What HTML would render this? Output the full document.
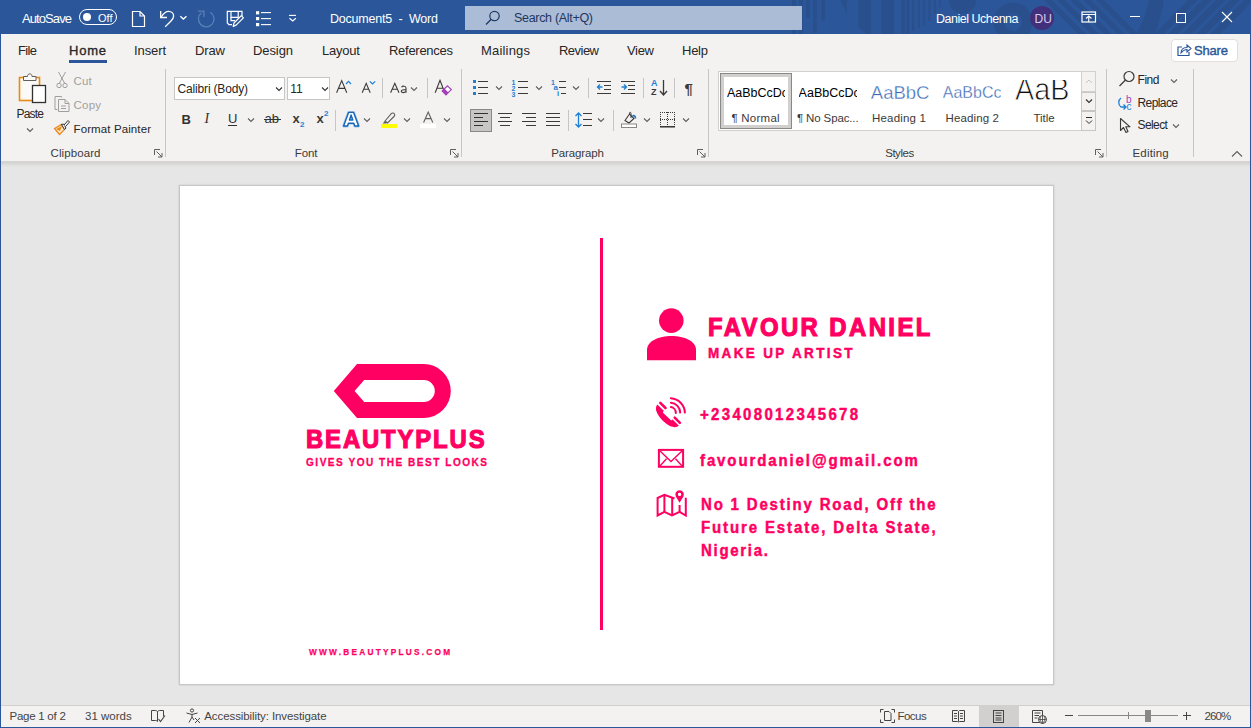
<!DOCTYPE html><html><head><meta charset="utf-8"><style>*{margin:0;padding:0;box-sizing:border-box}html,body{width:1251px;height:728px;overflow:hidden;background:#e6e6e6;font-family:"Liberation Sans",sans-serif;position:relative}.t{position:absolute;white-space:pre}svg{position:absolute;overflow:visible}</style></head><body><div style="position:absolute;left:0;top:0;width:1251px;height:34px;background:#2b579a;overflow:hidden"><svg width="1251" height="34" style="position:absolute;left:0;top:0"><g fill="#29508d"><rect x="792" y="0" width="4" height="34"/><rect x="799" y="0" width="4" height="34"/><rect x="806" y="0" width="4" height="18"/><rect x="813" y="0" width="4" height="32.6"/><rect x="821.3" y="0" width="3.8" height="20.6"/><polygon points="840.3,0 847,0 847,14.4"/><polygon points="858.2,0 871,0 871,34 866,34 858.2,27"/><rect x="881.2" y="0" width="13" height="34"/><rect x="901.3" y="0" width="3.7" height="34"/><rect x="906.5" y="0" width="3" height="34"/><rect x="912" y="0" width="2.2" height="31"/><rect x="917.8" y="0" width="2.2" height="28"/><rect x="923" y="0" width="2.2" height="25"/><rect x="928.3" y="0" width="2" height="21"/><rect x="934" y="0" width="2" height="14"/><rect x="939" y="0" width="1.6" height="7"/><path d="M948.7,0 A13.8,13.8 0 0 0 976.3,0 Z"/><polygon points="1044,0 1052,0 1086,34 1078,34"/><polygon points="1057,0 1065,0 1099,34 1091,34"/><polygon points="1070,0 1078,0 1112,34 1104,34"/><polygon points="1083,0 1091,0 1125,34 1117,34"/><polygon points="1096,0 1104,0 1138,34 1130,34"/><polygon points="1188,0 1198,0 1164,34 1154,34"/><polygon points="1202,0 1212,0 1178,34 1168,34"/><polygon points="1216,0 1226,0 1192,34 1182,34"/><polygon points="1230,0 1240,0 1206,34 1196,34"/><polygon points="1244,0 1254,0 1220,34 1210,34"/><path d="M1148.7,0 H1163.6 C1162,14 1158,26 1155,34 H1135.8 C1142,24 1147,12 1148.7,0 Z"/></g><circle cx="1013" cy="22" r="14.2" fill="none" stroke="#29508d" stroke-width="10.5"/></svg></div>
<div class="t" style="left:22.00px;top:12.15px;font:normal 13px/13px 'Liberation Sans';color:#fff;letter-spacing:-0.911px;">AutoSave</div>
<div style="position:absolute;left:79px;top:9px;width:38px;height:16px;border:1.3px solid #fff;border-radius:8px"></div><div style="position:absolute;left:82.5px;top:13px;width:8px;height:8px;background:#fff;border-radius:50%"></div>
<div class="t" style="left:98.00px;top:12.65px;font:normal 11px/11px 'Liberation Sans';color:#fff;letter-spacing:0.000px;">Off</div>
<svg style="position:absolute;left:130px;top:10px" width="16" height="18"><path d="M2.5,1.5 H10 L14.5,6 V16.5 H2.5 Z M10,1.5 V6 H14.5" fill="none" stroke="#fff" stroke-width="1.2"/></svg>
<svg style="left:0;top:0" width="230" height="34"><path d="M160.7,11 V17.5 H167" fill="none" stroke="#fff" stroke-width="1.3"/><path d="M161.2,17 C163.5,13.5 166,11.3 168.6,11.3 C171.5,11.3 173.6,13.4 173.6,16 C173.6,18 172.5,19.5 171,21 L165.2,26.7" fill="none" stroke="#fff" stroke-width="1.3"/><path d="M180.3,16.2 L183.4,19 L186.5,16.2" fill="none" stroke="#fff" stroke-width="1.3"/><path d="M210.2,12.3 A7.8,7.8 0 1 1 201.5,12.8" fill="none" stroke="#5a7fb7" stroke-width="1.3"/><path d="M198,11.2 H203.9 V17" fill="none" stroke="#5a7fb7" stroke-width="1.3"/></svg>
<svg style="left:0;top:0" width="300" height="34"><path d="M232,24.7 H229 L227.3,23 V11.3 H242 V16.3" fill="none" stroke="#fff" stroke-width="1.2"/><path d="M231,11.3 V17.3 H238.2 V11.3" fill="none" stroke="#fff" stroke-width="1.2"/><path d="M231,17.3 V20.7 H235" fill="none" stroke="#fff" stroke-width="1.2"/><path d="M233.2,26.5 L234,23 L241.3,15.7 L243.4,17.8 L236.1,25.1 Z" fill="none" stroke="#fff" stroke-width="1.2" stroke-linejoin="round"/><g fill="#fff"><rect x="256" y="11.2" width="3.2" height="3.2"/><rect x="256" y="17" width="3.2" height="3.2"/><rect x="256" y="23" width="3.2" height="3.2"/></g><g stroke="#fff" stroke-width="1.1"><line x1="261" y1="12.6" x2="271" y2="12.6"/><line x1="261" y1="18.6" x2="271" y2="18.6"/><line x1="261" y1="24.6" x2="271" y2="24.6"/></g><line x1="289" y1="15.4" x2="296" y2="15.4" stroke="#fff" stroke-width="1.1"/><path d="M289.5,18.2 L292.7,21 L295.9,18.2" fill="none" stroke="#fff" stroke-width="1.2"/></svg>
<div class="t" style="left:330.00px;top:13.38px;font:normal 12.5px/12.5px 'Liberation Sans';color:#fff;letter-spacing:-0.213px;">Document5  -  Word</div>
<div style="position:absolute;left:465px;top:6px;width:337px;height:24px;background:#aabcd6"></div>
<svg style="position:absolute;left:484px;top:9px" width="18" height="18"><circle cx="10.5" cy="7" r="4.7" fill="none" stroke="#1f3a64" stroke-width="1.2"/><line x1="7.2" y1="10.3" x2="2" y2="15.5" stroke="#1f3a64" stroke-width="1.3"/></svg>
<div class="t" style="left:514.00px;top:12.38px;font:normal 12.5px/12.5px 'Liberation Sans';color:#1f3660;letter-spacing:-0.309px;">Search (Alt+Q)</div>
<div class="t" style="left:936.00px;top:13.18px;font:normal 12.5px/12.5px 'Liberation Sans';color:#fff;letter-spacing:-0.496px;">Daniel Uchenna</div>
<div style="position:absolute;left:1030px;top:5.5px;width:24px;height:24px;border-radius:50%;background:#43307c"></div>
<div class="t" style="left:1034.50px;top:12.80px;font:normal 12px/12px 'Liberation Sans';color:#d8cdeb;letter-spacing:0.000px;">DU</div>
<svg style="position:absolute;left:1081px;top:11px" width="16" height="12"><rect x="1" y="1" width="13.5" height="10" fill="none" stroke="#fff" stroke-width="1.2"/><line x1="1" y1="3.5" x2="14.5" y2="3.5" stroke="#fff" stroke-width="1"/><path d="M5,7.5 L7.75,5 L10.5,7.5 M7.75,5 V11" fill="none" stroke="#fff" stroke-width="1.1"/></svg>
<div style="position:absolute;left:1130px;top:16px;width:10px;height:1px;background:#fff"></div>
<div style="position:absolute;left:1176px;top:12.5px;width:10px;height:10px;border:1px solid #fff"></div>
<svg style="position:absolute;left:1221px;top:11px" width="12" height="12"><path d="M1,1 L11,11 M11,1 L1,11" stroke="#fff" stroke-width="1.1"/></svg>
<div style="position:absolute;left:1px;top:34px;width:1249px;height:127px;background:#f3f2f1"></div>
<div class="t" style="left:18.00px;top:44.45px;font:normal 13px/13px 'Liberation Sans';color:#262626;letter-spacing:-0.651px;">File</div>
<div class="t" style="left:134.00px;top:44.45px;font:normal 13px/13px 'Liberation Sans';color:#262626;letter-spacing:-0.103px;">Insert</div>
<div class="t" style="left:195.00px;top:44.45px;font:normal 13px/13px 'Liberation Sans';color:#262626;letter-spacing:-0.115px;">Draw</div>
<div class="t" style="left:253.00px;top:44.45px;font:normal 13px/13px 'Liberation Sans';color:#262626;letter-spacing:-0.094px;">Design</div>
<div class="t" style="left:322.00px;top:44.45px;font:normal 13px/13px 'Liberation Sans';color:#262626;letter-spacing:-0.209px;">Layout</div>
<div class="t" style="left:389.00px;top:44.45px;font:normal 13px/13px 'Liberation Sans';color:#262626;letter-spacing:-0.276px;">References</div>
<div class="t" style="left:481.00px;top:44.45px;font:normal 13px/13px 'Liberation Sans';color:#262626;letter-spacing:0.188px;">Mailings</div>
<div class="t" style="left:559.00px;top:44.45px;font:normal 13px/13px 'Liberation Sans';color:#262626;letter-spacing:-0.525px;">Review</div>
<div class="t" style="left:627.00px;top:44.45px;font:normal 13px/13px 'Liberation Sans';color:#262626;letter-spacing:-0.318px;">View</div>
<div class="t" style="left:682.00px;top:44.45px;font:normal 13px/13px 'Liberation Sans';color:#262626;letter-spacing:-0.250px;">Help</div>
<div class="t" style="left:69.00px;top:44.45px;font:normal 13px/13px 'Liberation Sans';color:#262626;letter-spacing:0.771px;-webkit-text-stroke:0.35px #262626">Home</div>
<div style="position:absolute;left:69px;top:60px;width:38px;height:3px;background:#2b579a"></div>
<div style="position:absolute;left:1171px;top:39px;width:67px;height:23px;background:#fff;border:1px solid #e1dfdd;border-radius:4px"></div>
<svg style="position:absolute;left:1176px;top:43px" width="16" height="14"><path d="M6,4 H2 V12.5 H13 V9" fill="none" stroke="#2b579a" stroke-width="1.2"/><path d="M5,10 C5,6 8,4.5 11,4.5 V2 L15,5.5 L11,9 V6.5 C9,6.5 7,7.5 5,10 Z" fill="none" stroke="#2b579a" stroke-width="1.1"/></svg>
<div class="t" style="left:1194.00px;top:43.95px;font:normal 13px/13px 'Liberation Sans';color:#2b579a;letter-spacing:-0.176px;-webkit-text-stroke:0.4px #2b579a">Share</div>
<svg style="left:18px;top:72px" width="30" height="32"><rect x="1.5" y="5.5" width="20" height="23" fill="#fff8ec" stroke="#e8891b" stroke-width="1.6"/><rect x="4.5" y="8" width="14" height="18" fill="#fbfaf9" stroke="none"/><path d="M5.5,8.5 V4.5 H9.5 C9.5,1 14,1 14,4.5 H18 V8.5 Z" fill="#fbfaf9" stroke="#605e5c" stroke-width="1"/><rect x="14.5" y="13.5" width="13" height="17" fill="#fff" stroke="#323130" stroke-width="1.3"/></svg>
<div class="t" style="left:16.50px;top:107.80px;font:normal 12px/12px 'Liberation Sans';color:#262626;letter-spacing:-0.797px;">Paste</div>
<svg style="left:26px;top:127.0px" width="8" height="6"><path d="M1,1.5 L4.0,4.5 L7,1.5" fill="none" stroke="#605e5c" stroke-width="1.1"/></svg>
<svg style="left:56px;top:71px" width="13" height="18"><path d="M2.5,1 L8.5,12 M9.5,1 L3.5,12" stroke="#a19f9d" stroke-width="1" fill="none"/><circle cx="3" cy="14.5" r="2.2" fill="none" stroke="#a19f9d"/><circle cx="9" cy="14.5" r="2.2" fill="none" stroke="#a19f9d"/></svg>
<div class="t" style="left:73.50px;top:76.02px;font:normal 11.5px/11.5px 'Liberation Sans';color:#a19f9d;letter-spacing:0.197px;">Cut</div>
<svg style="left:53px;top:95px" width="18" height="18"><path d="M8.5,2.5 V1.5 H2 V14.5 H4.5" fill="none" stroke="#a19f9d" stroke-width="1"/><path d="M5.5,4.5 H12 L16,8.5 V16.5 H5.5 Z M12,4.5 V8.5 H16 M8,11 H13 M8,13.5 H13" fill="none" stroke="#a19f9d" stroke-width="1"/></svg>
<div class="t" style="left:73.50px;top:100.02px;font:normal 11.5px/11.5px 'Liberation Sans';color:#a19f9d;letter-spacing:0.214px;">Copy</div>
<svg style="left:53px;top:119px" width="18" height="17"><path d="M1.5,9.5 L8.5,5.5 L11.5,10.5 L6.5,15.5 Z" fill="#fde6c8" stroke="#e8891b" stroke-width="1.3"/><path d="M3,10 L9,7 L7,12 Z" fill="#e8891b"/><path d="M8.5,5.5 L11.5,10.5 L13,9 L10.5,5 Z" fill="#fff" stroke="#323130" stroke-width="1"/><path d="M11,6 L15,1.5 L16.5,3 L12.5,7.5" fill="#fff" stroke="#323130" stroke-width="1"/></svg>
<div class="t" style="left:73.50px;top:124.03px;font:normal 11.5px/11.5px 'Liberation Sans';color:#262626;letter-spacing:0.111px;">Format Painter</div>
<div class="t" style="left:50.50px;top:148.03px;font:normal 11.5px/11.5px 'Liberation Sans';color:#3b3a39;letter-spacing:0.096px;">Clipboard</div>
<svg style="left:154px;top:149px" width="9" height="9"><path d="M0.5,6 V0.5 H6" fill="none" stroke="#605e5c" stroke-width="1"/><path d="M2.5,2.5 L8,8 M8,4 V8 H4" fill="none" stroke="#605e5c" stroke-width="1"/></svg>
<div style="position:absolute;left:165px;top:69px;width:1px;height:88px;background:#c8c6c4"></div>
<div style="position:absolute;left:174px;top:77px;width:111px;height:23px;background:#fff;border:1px solid #c8c6c4"></div>
<div class="t" style="left:177.60px;top:82.80px;font:normal 12px/12px 'Liberation Sans';color:#262626;letter-spacing:-0.176px;">Calibri (Body)</div>
<svg style="left:275px;top:86.0px" width="8" height="6"><path d="M1,1.5 L4.0,4.5 L7,1.5" fill="none" stroke="#323130" stroke-width="1.1"/></svg>
<div style="position:absolute;left:287px;top:77px;width:43px;height:23px;background:#fff;border:1px solid #c8c6c4"></div>
<div class="t" style="left:290.30px;top:82.80px;font:normal 12px/12px 'Liberation Sans';color:#262626;letter-spacing:0.000px;">11</div>
<svg style="left:321px;top:86.0px" width="8" height="6"><path d="M1,1.5 L4.0,4.5 L7,1.5" fill="none" stroke="#323130" stroke-width="1.1"/></svg>
<svg style="left:0;top:0" width="470" height="130"><g fill="none" stroke="#3b3a39" stroke-width="1.1"><path d="M336.6,92.8 L341.7,80.6 L346.8,92.8 M338.4,88.4 H345"/><path d="M362.2,92.8 L366.2,83.4 L370.2,92.8 M363.6,89.3 H368.8"/><path d="M390.6,92.8 L394.8,83.4 L399,92.8 M392,89.3 H397.6"/><path d="M401.5,87.2 C402.5,85.8 406,85.6 406,88 V92.8 M406,89.8 C403,89.4 401.2,90 401.2,91.3 C401.2,93 404.5,93 406,91.4"/><path d="M435.2,92.8 L440,80.2 L444.8,92.8 M437,88.2 H442.6"/><path d="M423.6,122.5 L428.2,112 L432.8,122.5 M425.2,118.6 H431.2" stroke="#605e5c"/></g><path d="M447.5,85.8 L451.3,89.6 L446,94.9 L442.2,91.1 Z" fill="#fff" stroke="#a33fb8" stroke-width="1.2"/><path d="M442.2,91.1 L444.6,88.7 L448.4,92.5 L446,94.9 Z" fill="#a33fb8"/><path d="M346,84 L348.5,81.3 L351,84" fill="none" stroke="#1f7fd4" stroke-width="1.2"/><path d="M369.8,81.3 L372.5,84 L375.2,81.3" fill="none" stroke="#1f7fd4" stroke-width="1.2"/></svg>
<div style="position:absolute;left:382px;top:78px;width:1px;height:20px;background:#c8c6c4"></div>
<svg style="left:410px;top:86.0px" width="8" height="6"><path d="M1,1.5 L4.0,4.5 L7,1.5" fill="none" stroke="#605e5c" stroke-width="1.1"/></svg>
<div style="position:absolute;left:427px;top:78px;width:1px;height:20px;background:#c8c6c4"></div>
<div class="t" style="left:181.50px;top:112.95px;font:bold 13px/13px 'Liberation Sans';color:#323130;letter-spacing:0.000px;">B</div>
<div class="t" style="left:204.50px;top:112.10px;font:normal 14px/14px 'Liberation Serif';color:#323130;letter-spacing:0.000px;font-style:italic">I</div>
<div class="t" style="left:228.00px;top:111.95px;font:normal 13px/13px 'Liberation Sans';color:#323130;letter-spacing:0.000px;">U</div>
<div style="position:absolute;left:228px;top:125px;width:9px;height:1px;background:#323130"></div>
<svg style="left:247px;top:117.0px" width="8" height="6"><path d="M1,1.5 L4.0,4.5 L7,1.5" fill="none" stroke="#605e5c" stroke-width="1.1"/></svg>
<div class="t" style="left:264.50px;top:112.45px;font:normal 13px/13px 'Liberation Sans';color:#323130;letter-spacing:0.000px;">ab</div>
<div style="position:absolute;left:263.5px;top:118.5px;width:17px;height:1px;background:#323130"></div>
<div class="t" style="left:292.50px;top:112.45px;font:bold 13px/13px 'Liberation Sans';color:#3b3a39;letter-spacing:0.000px;">x</div>
<div class="t" style="left:300.00px;top:120.70px;font:bold 8px/8px 'Liberation Sans';color:#1f7fd4;letter-spacing:0.000px;">2</div>
<div class="t" style="left:316.50px;top:112.45px;font:bold 13px/13px 'Liberation Sans';color:#3b3a39;letter-spacing:0.000px;">x</div>
<div class="t" style="left:324.00px;top:110.20px;font:bold 8px/8px 'Liberation Sans';color:#1f7fd4;letter-spacing:0.000px;">2</div>
<div style="position:absolute;left:335px;top:110px;width:1px;height:21px;background:#c8c6c4"></div>
<svg style="left:0;top:0" width="470" height="130"><path d="M343.6,126 L348.6,112.4 H353.6 L358.6,126 H354.8 L353.8,123.2 H348.4 L347.4,126 Z M349.4,120 H352.8 L351.1,115 Z" fill="#fff" fill-rule="evenodd" stroke="#9fc8ee" stroke-width="2.8" stroke-linejoin="round"/><path d="M343.6,126 L348.6,112.4 H353.6 L358.6,126 H354.8 L353.8,123.2 H348.4 L347.4,126 Z M349.4,120 H352.8 L351.1,115 Z" fill="#fff" fill-rule="evenodd" stroke="#1666b8" stroke-width="1.4" stroke-linejoin="round"/></svg>
<svg style="left:362.5px;top:117.0px" width="8" height="6"><path d="M1,1.5 L4.0,4.5 L7,1.5" fill="none" stroke="#605e5c" stroke-width="1.1"/></svg>
<svg style="left:380px;top:111px" width="18" height="18"><path d="M5,10 L11.5,2.5 C12.5,1.5 14,2 14.5,3 C15,4 14.5,5 14,5.5 L7.5,12 Z" fill="none" stroke="#605e5c" stroke-width="1.1"/><path d="M5,10 L7.5,12 L5.5,12.5 L2.5,12.5 Z" fill="#605e5c"/><rect x="1" y="13" width="16" height="4" fill="#ffff00"/></svg>
<svg style="left:403px;top:117.0px" width="8" height="6"><path d="M1,1.5 L4.0,4.5 L7,1.5" fill="none" stroke="#605e5c" stroke-width="1.1"/></svg>
<div style="position:absolute;left:420px;top:124px;width:16px;height:4px;background:#fff"></div>
<svg style="left:443px;top:117.0px" width="8" height="6"><path d="M1,1.5 L4.0,4.5 L7,1.5" fill="none" stroke="#605e5c" stroke-width="1.1"/></svg>
<div class="t" style="left:294.80px;top:148.03px;font:normal 11.5px/11.5px 'Liberation Sans';color:#3b3a39;letter-spacing:-0.105px;">Font</div>
<svg style="left:450px;top:149px" width="9" height="9"><path d="M0.5,6 V0.5 H6" fill="none" stroke="#605e5c" stroke-width="1"/><path d="M2.5,2.5 L8,8 M8,4 V8 H4" fill="none" stroke="#605e5c" stroke-width="1"/></svg>
<div style="position:absolute;left:461px;top:69px;width:1px;height:88px;background:#c8c6c4"></div>
<div style="position:absolute;left:473px;top:80px;width:3px;height:3px;background:#1f7fd4"></div><div style="position:absolute;left:473px;top:86px;width:3px;height:3px;background:#1f7fd4"></div><div style="position:absolute;left:473px;top:92px;width:3px;height:3px;background:#1f7fd4"></div>
<div style="position:absolute;left:478px;top:81px;width:10px;height:1.2px;background:#3b3a39"></div><div style="position:absolute;left:478px;top:87px;width:10px;height:1.2px;background:#3b3a39"></div><div style="position:absolute;left:478px;top:93px;width:10px;height:1.2px;background:#3b3a39"></div>
<svg style="left:495px;top:85.0px" width="8" height="6"><path d="M1,1.5 L4.0,4.5 L7,1.5" fill="none" stroke="#605e5c" stroke-width="1.1"/></svg>
<div class="t" style="left:511.50px;top:78.55px;font:bold 7px/7px 'Liberation Sans';color:#1f7fd4;letter-spacing:0.000px;">1</div>
<div class="t" style="left:511.50px;top:84.55px;font:bold 7px/7px 'Liberation Sans';color:#1f7fd4;letter-spacing:0.000px;">2</div>
<div class="t" style="left:511.50px;top:90.55px;font:bold 7px/7px 'Liberation Sans';color:#1f7fd4;letter-spacing:0.000px;">3</div>
<div style="position:absolute;left:517.5px;top:81px;width:10px;height:1.2px;background:#3b3a39"></div><div style="position:absolute;left:517.5px;top:87px;width:10px;height:1.2px;background:#3b3a39"></div><div style="position:absolute;left:517.5px;top:93px;width:10px;height:1.2px;background:#3b3a39"></div>
<svg style="left:534.5px;top:85.0px" width="8" height="6"><path d="M1,1.5 L4.0,4.5 L7,1.5" fill="none" stroke="#605e5c" stroke-width="1.1"/></svg>
<div class="t" style="left:551.00px;top:78.55px;font:bold 7px/7px 'Liberation Sans';color:#1f7fd4;letter-spacing:0.000px;">1</div>
<div class="t" style="left:553.50px;top:83.70px;font:bold 8px/8px 'Liberation Sans';color:#1f7fd4;letter-spacing:0.000px;">a</div>
<div class="t" style="left:557.00px;top:90.12px;font:bold 7.5px/7.5px 'Liberation Sans';color:#1f7fd4;letter-spacing:0.000px;">i</div>
<div style="position:absolute;left:559px;top:81px;width:7px;height:1.2px;background:#3b3a39"></div><div style="position:absolute;left:559px;top:87px;width:7px;height:1.2px;background:#3b3a39"></div><div style="position:absolute;left:561px;top:93px;width:5px;height:1.2px;background:#3b3a39"></div>
<svg style="left:572px;top:85.0px" width="8" height="6"><path d="M1,1.5 L4.0,4.5 L7,1.5" fill="none" stroke="#605e5c" stroke-width="1.1"/></svg>
<div style="position:absolute;left:588px;top:78px;width:1px;height:20px;background:#c8c6c4"></div>
<div style="position:absolute;left:597px;top:81px;width:14px;height:1.2px;background:#3b3a39"></div><div style="position:absolute;left:597px;top:93px;width:14px;height:1.2px;background:#3b3a39"></div>
<div style="position:absolute;left:604px;top:85px;width:7px;height:1.2px;background:#3b3a39"></div><div style="position:absolute;left:604px;top:89px;width:7px;height:1.2px;background:#3b3a39"></div>
<svg style="left:596px;top:83px" width="8" height="8"><path d="M6.5,4 H1.5 M4,1.5 L1.5,4 L4,6.5" fill="none" stroke="#1f7fd4" stroke-width="1.3"/></svg>
<div style="position:absolute;left:621px;top:81px;width:14px;height:1.2px;background:#3b3a39"></div><div style="position:absolute;left:621px;top:93px;width:14px;height:1.2px;background:#3b3a39"></div>
<div style="position:absolute;left:628px;top:85px;width:7px;height:1.2px;background:#3b3a39"></div><div style="position:absolute;left:628px;top:89px;width:7px;height:1.2px;background:#3b3a39"></div>
<svg style="left:621px;top:83px" width="8" height="8"><path d="M0.5,4 H5.5 M3,1.5 L5.5,4 L3,6.5" fill="none" stroke="#1f7fd4" stroke-width="1.3"/></svg>
<div style="position:absolute;left:643px;top:78px;width:1px;height:20px;background:#c8c6c4"></div>
<div class="t" style="left:651.00px;top:79.05px;font:bold 9px/9px 'Liberation Sans';color:#1f7fd4;letter-spacing:0.000px;">A</div>
<div class="t" style="left:651.00px;top:88.35px;font:bold 9px/9px 'Liberation Sans';color:#3b3a39;letter-spacing:0.000px;">Z</div>
<svg style="left:659px;top:79px" width="10" height="18"><path d="M4.5,1 V16 M1,12 L4.5,16 L8,12" fill="none" stroke="#3b3a39" stroke-width="1.3"/></svg>
<div style="position:absolute;left:674px;top:78px;width:1px;height:20px;background:#c8c6c4"></div>
<div class="t" style="left:684.50px;top:81.25px;font:bold 15px/15px 'Liberation Sans';color:#3b3a39;letter-spacing:0.000px;">¶</div>
<div style="position:absolute;left:470px;top:109px;width:22px;height:23px;background:#c8c6c4;border:1px solid #8a8886"></div>
<div style="position:absolute;left:473.5px;top:112.5px;width:14px;height:1.2px;background:#323130"></div><div style="position:absolute;left:473.5px;top:116.5px;width:9px;height:1.2px;background:#323130"></div><div style="position:absolute;left:473.5px;top:120.5px;width:14px;height:1.2px;background:#323130"></div><div style="position:absolute;left:473.5px;top:124.5px;width:9px;height:1.2px;background:#323130"></div>
<div style="position:absolute;left:498px;top:112.5px;width:14px;height:1.2px;background:#3b3a39"></div><div style="position:absolute;left:500px;top:116.5px;width:10px;height:1.2px;background:#3b3a39"></div><div style="position:absolute;left:498px;top:120.5px;width:14px;height:1.2px;background:#3b3a39"></div><div style="position:absolute;left:500px;top:124.5px;width:10px;height:1.2px;background:#3b3a39"></div>
<div style="position:absolute;left:522px;top:112.5px;width:14px;height:1.2px;background:#3b3a39"></div><div style="position:absolute;left:526px;top:116.5px;width:10px;height:1.2px;background:#3b3a39"></div><div style="position:absolute;left:522px;top:120.5px;width:14px;height:1.2px;background:#3b3a39"></div><div style="position:absolute;left:526px;top:124.5px;width:10px;height:1.2px;background:#3b3a39"></div>
<div style="position:absolute;left:546px;top:112.5px;width:14px;height:1.2px;background:#3b3a39"></div><div style="position:absolute;left:546px;top:116.5px;width:14px;height:1.2px;background:#3b3a39"></div><div style="position:absolute;left:546px;top:120.5px;width:14px;height:1.2px;background:#3b3a39"></div><div style="position:absolute;left:546px;top:124.5px;width:14px;height:1.2px;background:#3b3a39"></div>
<div style="position:absolute;left:568px;top:110px;width:1px;height:21px;background:#c8c6c4"></div>
<svg style="left:574px;top:111px" width="10" height="18"><path d="M4.5,2 V16 M1.5,5 L4.5,2 L7.5,5 M1.5,13 L4.5,16 L7.5,13" fill="none" stroke="#1f7fd4" stroke-width="1.3"/></svg>
<div style="position:absolute;left:583px;top:112.5px;width:9px;height:1.2px;background:#3b3a39"></div><div style="position:absolute;left:583px;top:118.5px;width:9px;height:1.2px;background:#3b3a39"></div><div style="position:absolute;left:583px;top:124.5px;width:9px;height:1.2px;background:#3b3a39"></div>
<svg style="left:597px;top:117.0px" width="8" height="6"><path d="M1,1.5 L4.0,4.5 L7,1.5" fill="none" stroke="#605e5c" stroke-width="1.1"/></svg>
<div style="position:absolute;left:613px;top:110px;width:1px;height:21px;background:#c8c6c4"></div>
<svg style="left:620px;top:111px" width="18" height="18"><path d="M5,9.5 L9.5,3 L14,7.5 L9,12 Z" fill="none" stroke="#3b3a39" stroke-width="1.1"/><path d="M9.5,3 C9,1 11,0.5 11,2.5 V7" fill="none" stroke="#3b3a39" stroke-width="1"/><path d="M12.5,5 C14,4 15.5,5 15.5,7.5" fill="none" stroke="#1f6fc0" stroke-width="1.6"/><rect x="1.5" y="13" width="15" height="3.5" fill="#fff" stroke="#8a8886" stroke-width="1"/></svg>
<svg style="left:643px;top:117.0px" width="8" height="6"><path d="M1,1.5 L4.0,4.5 L7,1.5" fill="none" stroke="#605e5c" stroke-width="1.1"/></svg>
<svg style="left:659px;top:111px" width="18" height="18"><g fill="#3b3a39"><rect x="1" y="1" width="1" height="1"/><rect x="1" y="8" width="1" height="1"/><rect x="3" y="1" width="1" height="1"/><rect x="3" y="8" width="1" height="1"/><rect x="5" y="1" width="1" height="1"/><rect x="5" y="8" width="1" height="1"/><rect x="7" y="1" width="1" height="1"/><rect x="7" y="8" width="1" height="1"/><rect x="9" y="1" width="1" height="1"/><rect x="9" y="8" width="1" height="1"/><rect x="11" y="1" width="1" height="1"/><rect x="11" y="8" width="1" height="1"/><rect x="13" y="1" width="1" height="1"/><rect x="13" y="8" width="1" height="1"/><rect x="15" y="1" width="1" height="1"/><rect x="15" y="8" width="1" height="1"/><rect x="1" y="1" width="1" height="1"/><rect x="15" y="1" width="1" height="1"/><rect x="8" y="1" width="1" height="1"/><rect x="1" y="3" width="1" height="1"/><rect x="15" y="3" width="1" height="1"/><rect x="8" y="3" width="1" height="1"/><rect x="1" y="5" width="1" height="1"/><rect x="15" y="5" width="1" height="1"/><rect x="8" y="5" width="1" height="1"/><rect x="1" y="7" width="1" height="1"/><rect x="15" y="7" width="1" height="1"/><rect x="8" y="7" width="1" height="1"/><rect x="1" y="9" width="1" height="1"/><rect x="15" y="9" width="1" height="1"/><rect x="8" y="9" width="1" height="1"/><rect x="1" y="11" width="1" height="1"/><rect x="15" y="11" width="1" height="1"/><rect x="8" y="11" width="1" height="1"/><rect x="1" y="13" width="1" height="1"/><rect x="15" y="13" width="1" height="1"/><rect x="8" y="13" width="1" height="1"/><rect x="1" y="15" width="1" height="1"/><rect x="15" y="15" width="1" height="1"/><rect x="8" y="15" width="1" height="1"/></g><line x1="1" y1="15.8" x2="16" y2="15.8" stroke="#262626" stroke-width="1.4"/></svg>
<svg style="left:682px;top:117.0px" width="8" height="6"><path d="M1,1.5 L4.0,4.5 L7,1.5" fill="none" stroke="#605e5c" stroke-width="1.1"/></svg>
<div class="t" style="left:551.30px;top:148.03px;font:normal 11.5px/11.5px 'Liberation Sans';color:#3b3a39;letter-spacing:-0.127px;">Paragraph</div>
<svg style="left:697px;top:149px" width="9" height="9"><path d="M0.5,6 V0.5 H6" fill="none" stroke="#605e5c" stroke-width="1"/><path d="M2.5,2.5 L8,8 M8,4 V8 H4" fill="none" stroke="#605e5c" stroke-width="1"/></svg>
<div style="position:absolute;left:708px;top:69px;width:1px;height:88px;background:#c8c6c4"></div>
<div style="position:absolute;left:718px;top:71px;width:378px;height:60px;background:#fff;border:1px solid #d2d0ce"></div>
<div style="position:absolute;left:720px;top:73px;width:72px;height:56px;border:1px solid #8a8886;box-shadow:inset 0 0 0 3px #d2d0ce"></div>
<div class="t" style="left:726.90px;top:87.08px;font:normal 12.5px/12.5px 'Liberation Sans';color:#000;letter-spacing:0.000px;width:58px;overflow:hidden">AaBbCcDc</div>
<div class="t" style="left:731.40px;top:112.82px;font:normal 11.5px/11.5px 'Liberation Sans';color:#3b3a39;letter-spacing:0.252px;">¶ Normal</div>
<div class="t" style="left:798.60px;top:87.08px;font:normal 12.5px/12.5px 'Liberation Sans';color:#000;letter-spacing:0.000px;width:58px;overflow:hidden">AaBbCcDc</div>
<div class="t" style="left:797.00px;top:112.82px;font:normal 11.5px/11.5px 'Liberation Sans';color:#3b3a39;letter-spacing:-0.134px;">¶ No Spac...</div>
<div class="t" style="left:870.80px;top:83.98px;font:normal 18.5px/18.5px 'Liberation Sans';color:#3d6bb8;letter-spacing:0.000px;width:58px;overflow:hidden;-webkit-text-stroke:0.35px #fff">AaBbCc</div>
<div class="t" style="left:872.00px;top:112.82px;font:normal 11.5px/11.5px 'Liberation Sans';color:#3b3a39;letter-spacing:0.195px;">Heading 1</div>
<div class="t" style="left:942.80px;top:84.80px;font:normal 16px/16px 'Liberation Sans';color:#3d6bb8;letter-spacing:0.000px;width:58px;overflow:hidden;-webkit-text-stroke:0.3px #fff">AaBbCcD</div>
<div class="t" style="left:945.60px;top:112.82px;font:normal 11.5px/11.5px 'Liberation Sans';color:#3b3a39;letter-spacing:0.120px;">Heading 2</div>
<div style="position:absolute;left:1010px;top:80px;width:70px;height:26px;overflow:hidden"><div class="t" style="left:5px;top:-7.4px;font:normal 32px/32px 'Liberation Sans';color:#111;letter-spacing:0px;-webkit-text-stroke:0.8px #fff;transform:scaleX(0.9);transform-origin:0 0">AaB</div></div>
<div class="t" style="left:1033.40px;top:112.82px;font:normal 11.5px/11.5px 'Liberation Sans';color:#3b3a39;letter-spacing:-0.003px;">Title</div>
<div style="position:absolute;left:1081px;top:71px;width:15px;height:21px;background:#f3f2f1;border:1px solid #d2d0ce"></div>
<div style="position:absolute;left:1081px;top:92px;width:15px;height:19px;background:#f3f2f1;border:1px solid #c8c6c4"></div>
<div style="position:absolute;left:1081px;top:111px;width:15px;height:20px;background:#f3f2f1;border:1px solid #c8c6c4"></div>
<svg style="left:1085px;top:79px" width="8" height="5"><path d="M1,4 L4,1 L7,4" fill="none" stroke="#c8c6c4" stroke-width="1"/></svg>
<svg style="left:1085px;top:98.0px" width="8" height="6"><path d="M1,1.5 L4.0,4.5 L7,1.5" fill="none" stroke="#323130" stroke-width="1.1"/></svg>
<svg style="left:1085px;top:116px" width="8" height="10"><line x1="1" y1="1.5" x2="7" y2="1.5" stroke="#323130"/><path d="M1,4.5 L4,7.5 L7,4.5" fill="none" stroke="#323130" stroke-width="1"/></svg>
<div class="t" style="left:885.20px;top:148.03px;font:normal 11.5px/11.5px 'Liberation Sans';color:#3b3a39;letter-spacing:-0.466px;">Styles</div>
<svg style="left:1095px;top:149px" width="9" height="9"><path d="M0.5,6 V0.5 H6" fill="none" stroke="#605e5c" stroke-width="1"/><path d="M2.5,2.5 L8,8 M8,4 V8 H4" fill="none" stroke="#605e5c" stroke-width="1"/></svg>
<div style="position:absolute;left:1106px;top:69px;width:1px;height:88px;background:#c8c6c4"></div>
<svg style="left:1118px;top:70px" width="18" height="18"><circle cx="11" cy="6.5" r="5" fill="none" stroke="#3b3a39" stroke-width="1.2"/><line x1="7.5" y1="10" x2="1.5" y2="16" stroke="#3b3a39" stroke-width="1.3"/></svg>
<div class="t" style="left:1137.50px;top:73.80px;font:normal 12px/12px 'Liberation Sans';color:#262626;letter-spacing:-0.448px;">Find</div>
<svg style="left:1170px;top:77.5px" width="8" height="6"><path d="M1,1.5 L4.0,4.5 L7,1.5" fill="none" stroke="#605e5c" stroke-width="1.1"/></svg>
<svg style="left:1117px;top:94px" width="17" height="17"><path d="M4,4 C1,6 1,11 4,13 H9 M6.5,10.5 L9,13 L6.5,15.5" fill="none" stroke="#1f7fd4" stroke-width="1.3"/></svg>
<div class="t" style="left:1126.00px;top:94.50px;font:normal 10px/10px 'Liberation Sans';color:#a33fb8;letter-spacing:0.000px;">b</div>
<div class="t" style="left:1126.50px;top:102.00px;font:normal 10px/10px 'Liberation Sans';color:#1f7fd4;letter-spacing:0.000px;">c</div>
<div class="t" style="left:1137.50px;top:96.80px;font:normal 12px/12px 'Liberation Sans';color:#262626;letter-spacing:-0.589px;">Replace</div>
<svg style="left:1119px;top:117px" width="13" height="17"><path d="M1.5,1.5 V13.5 L4.5,10.5 L7,15.5 L9,14.5 L6.8,9.8 H11 Z" fill="none" stroke="#3b3a39" stroke-width="1.1" stroke-linejoin="round"/></svg>
<div class="t" style="left:1137.50px;top:119.30px;font:normal 12px/12px 'Liberation Sans';color:#262626;letter-spacing:-0.592px;">Select</div>
<svg style="left:1172px;top:123.0px" width="8" height="6"><path d="M1,1.5 L4.0,4.5 L7,1.5" fill="none" stroke="#605e5c" stroke-width="1.1"/></svg>
<div class="t" style="left:1132.50px;top:148.03px;font:normal 11.5px/11.5px 'Liberation Sans';color:#3b3a39;letter-spacing:0.171px;">Editing</div>
<div style="position:absolute;left:1193px;top:69px;width:1px;height:88px;background:#c8c6c4"></div>
<svg style="left:1231px;top:150px" width="12" height="8"><path d="M1,6.5 L6,1.5 L11,6.5" fill="none" stroke="#605e5c" stroke-width="1.1"/></svg>
<div style="position:absolute;left:1px;top:161px;width:1249px;height:1px;background:#d6d5d4"></div>
<div style="position:absolute;left:1px;top:162px;width:1249px;height:5px;background:linear-gradient(#d2d1d0,#e6e6e6)"></div>
<div style="position:absolute;left:179px;top:185px;width:875px;height:500px;background:#fff;border:1px solid #c6c6c6;box-shadow:0 0 2px rgba(0,0,0,0.15)"></div>
<div style="position:absolute;left:600px;top:238px;width:3px;height:391.5px;background:#ff0062"></div>
<svg style="left:0;top:0" width="1251" height="728"><path fill="#ff0062" fill-rule="evenodd" d="M333.8,391 L357,364 H423.8 A27,27 0 0 1 423.8,418 H357 Z M354.6,391 L364.2,380 H423.8 A11,11 0 0 1 423.8,402 H364.2 Z"/><circle cx="671.3" cy="320.6" r="12.3" fill="#ff0062"/><path fill="#ff0062" d="M647,360.3 V350 C647,341 659,336 671.5,336 C684,336 696,341 696,350 V360.3 Z"/></svg>
<svg style="left:650px;top:392px" width="42" height="40"><path fill="#ff0062" d="M7.4,12.4 L13.8,18.8 L12.8,20.4 L21.2,28.6 L22.6,27.6 L28.8,33.6 C26.5,36 21,35.8 16,31.6 C11,27.4 7.5,23 6.3,19 C5.5,16.5 6,14 7.4,12.4 Z"/><path d="M10.3,10.8 L15.5,16 M24.7,25.6 L29.9,30.8" stroke="#ff0062" stroke-width="2.5" stroke-linecap="round"/><g fill="none" stroke="#ff0062" stroke-width="2" stroke-linecap="round"><path d="M20.9,6.3 A15,15 0 0 1 34.9,20.6"/><path d="M20.9,10.7 A10.2,10.2 0 0 1 30.2,20.6"/><path d="M20.9,15.1 A5.8,5.8 0 0 1 25.8,20.9"/></g></svg>
<svg style="left:650px;top:440px" width="42" height="35"><rect x="8.9" y="9.9" width="24.2" height="16.9" fill="none" stroke="#ff0062" stroke-width="2"/><path d="M9.5,10.5 L21,21.5 L32.5,10.5 M9.5,26.5 L16.5,18.8 M32.5,26.5 L25.5,18.8" fill="none" stroke="#ff0062" stroke-width="1.4"/></svg>
<svg style="left:650px;top:485px" width="42" height="35"><g fill="none" stroke="#ff0062" stroke-width="2" stroke-linejoin="miter"><path d="M24.5,13.5 L14.4,9.9 L7.6,13 V30.5 L14.4,26.8 L22,30.5 L29.6,26.8 L35.8,30.5 V12.8"/><path d="M14.4,9.9 V26.8 M22.2,13 V30.5 M29.6,20 V26.8"/></g><path fill="#ff0062" fill-rule="evenodd" d="M29.6,17.8 L25.8,11.5 A4.3,4.3 0 1 1 33.4,11.5 Z M29.6,7.8 A1.5,1.5 0 1 0 29.61,7.8 Z"/><circle cx="29.6" cy="9.4" r="1.6" fill="#fff"/></svg>
<div class="t" style="left:306.30px;top:425.88px;font:bold 26.5px/26.5px 'Liberation Sans';color:#ff0062;letter-spacing:2.089px;-webkit-text-stroke:1.2px #ff0062;--sx:0.9;transform:scaleX(0.9);transform-origin:0 0">BEAUTYPLUS</div>
<div class="t" style="left:305.60px;top:457.18px;font:bold 11.2px/11.2px 'Liberation Sans';color:#ff0062;letter-spacing:1.676px;-webkit-text-stroke:0.3px #ff0062;--sx:0.9;transform:scaleX(0.9);transform-origin:0 0">GIVES YOU THE BEST LOOKS</div>
<div class="t" style="left:708.10px;top:313.88px;font:bold 26.5px/26.5px 'Liberation Sans';color:#ff0062;letter-spacing:2.711px;-webkit-text-stroke:1.2px #ff0062;--sx:0.9;transform:scaleX(0.9);transform-origin:0 0">FAVOUR DANIEL</div>
<div class="t" style="left:708.10px;top:346.03px;font:bold 14.2px/14.2px 'Liberation Sans';color:#ff0062;letter-spacing:2.484px;-webkit-text-stroke:0.45px #ff0062;--sx:0.95;transform:scaleX(0.95);transform-origin:0 0">MAKE UP ARTIST</div>
<div class="t" style="left:699.50px;top:407.27px;font:bold 15.8px/15.8px 'Liberation Sans';color:#ff0062;letter-spacing:2.442px;-webkit-text-stroke:0.45px #ff0062;--sx:0.95;transform:scaleX(0.95);transform-origin:0 0">+23408012345678</div>
<div class="t" style="left:700.20px;top:453.17px;font:bold 15.8px/15.8px 'Liberation Sans';color:#ff0062;letter-spacing:1.990px;-webkit-text-stroke:0.45px #ff0062;--sx:0.95;transform:scaleX(0.95);transform-origin:0 0">favourdaniel@gmail.com</div>
<div class="t" style="left:700.70px;top:497.27px;font:bold 15.8px/15.8px 'Liberation Sans';color:#ff0062;letter-spacing:1.912px;-webkit-text-stroke:0.45px #ff0062;--sx:0.95;transform:scaleX(0.95);transform-origin:0 0">No 1 Destiny Road, Off the</div>
<div class="t" style="left:700.70px;top:520.07px;font:bold 15.8px/15.8px 'Liberation Sans';color:#ff0062;letter-spacing:1.973px;-webkit-text-stroke:0.45px #ff0062;--sx:0.95;transform:scaleX(0.95);transform-origin:0 0">Future Estate, Delta State,</div>
<div class="t" style="left:700.70px;top:543.17px;font:bold 15.8px/15.8px 'Liberation Sans';color:#ff0062;letter-spacing:1.781px;-webkit-text-stroke:0.45px #ff0062;--sx:0.95;transform:scaleX(0.95);transform-origin:0 0">Nigeria.</div>
<div class="t" style="left:309.20px;top:647.98px;font:bold 9.2px/9.2px 'Liberation Sans';color:#ff0062;letter-spacing:2.497px;-webkit-text-stroke:0.25px #ff0062;--sx:0.9;transform:scaleX(0.9);transform-origin:0 0">WWW.BEAUTYPLUS.COM</div>
<div style="position:absolute;left:1px;top:705px;width:1249px;height:22px;background:#f3f2f1;border-top:1px solid #d2d0ce"></div>
<div class="t" style="left:9.50px;top:711.23px;font:normal 11.5px/11.5px 'Liberation Sans';color:#444;letter-spacing:-0.253px;">Page 1 of 2</div>
<div class="t" style="left:85.00px;top:711.23px;font:normal 11.5px/11.5px 'Liberation Sans';color:#444;letter-spacing:0.018px;">31 words</div>
<svg style="left:150px;top:709px" width="17" height="15"><path d="M1.5,1.5 H5.5 C6.5,1.5 7.5,2.3 7.5,3 C7.5,2.3 8.5,1.5 9.5,1.5 H13.5 V7.5 M7.5,3 V12.5 M1.5,1.5 V11.5 H5.5 C6.5,11.5 7.5,12 7.5,12.5" fill="none" stroke="#444" stroke-width="1"/><path d="M8.5,10 L10.5,12.5 L15,6.5" fill="none" stroke="#444" stroke-width="1.1"/></svg>
<svg style="left:185px;top:708px" width="17" height="16"><circle cx="7" cy="2.5" r="1.6" fill="none" stroke="#444"/><path d="M1.5,5 L7,6.5 L12.5,5 M7,6.5 V9 L4,14.5 M7,9 L9,12" fill="none" stroke="#444" stroke-width="1"/><path d="M10,10 L15,15 M15,10 L10,15" stroke="#444" stroke-width="1"/></svg>
<div class="t" style="left:204.30px;top:711.23px;font:normal 11.5px/11.5px 'Liberation Sans';color:#444;letter-spacing:-0.094px;">Accessibility: Investigate</div>
<svg style="left:879px;top:708px" width="17" height="16"><path d="M1.5,4.5 V1.5 H4.5 M12.5,1.5 H15.5 V4.5 M15.5,11.5 V14.5 H12.5 M4.5,14.5 H1.5 V11.5" fill="none" stroke="#444" stroke-width="1"/><path d="M5.5,3.5 H10 L12,5.5 V12.5 H5.5 Z" fill="none" stroke="#444" stroke-width="1"/></svg>
<div class="t" style="left:897.40px;top:711.23px;font:normal 11.5px/11.5px 'Liberation Sans';color:#444;letter-spacing:-0.507px;">Focus</div>
<svg style="left:951px;top:709px" width="16" height="14"><path d="M1.5,1.5 H6.5 L7.5,2.5 L8.5,1.5 H13.5 V12.5 H8.5 L7.5,13 L6.5,12.5 H1.5 Z M7.5,2.5 V12.5" fill="none" stroke="#444" stroke-width="1"/><path d="M3,4.5 H6 M3,7 H6 M3,9.5 H6 M9,4.5 H12 M9,7 H12 M9,9.5 H12" stroke="#444" stroke-width="1"/></svg>
<div style="position:absolute;left:979px;top:706px;width:40px;height:21px;background:#d2d0ce"></div>
<svg style="left:992px;top:709px" width="14" height="15"><rect x="1.5" y="1.5" width="10" height="12" fill="none" stroke="#444"/><path d="M3.5,4 H9.5 M3.5,6.5 H9.5 M3.5,9 H9.5 M3.5,11 H9.5" stroke="#444"/></svg>
<svg style="left:1031px;top:709px" width="17" height="15"><path d="M9,13.5 H1.5 V1.5 H11.5 V7" fill="none" stroke="#444"/><path d="M3.5,4 H9.5 M3.5,6.5 H8 M3.5,9 H6.5" stroke="#444"/><circle cx="11.5" cy="10.5" r="4" fill="#f3f2f1" stroke="#444"/><path d="M7.5,10.5 H15.5 M11.5,6.5 V14.5 M9.5,7.5 C8.5,10 9.5,13 11.5,14.5 M13.5,7.5 C14.5,10 13.5,13 11.5,14.5" fill="none" stroke="#444" stroke-width="0.8"/></svg>
<div style="position:absolute;left:1065px;top:715px;width:8px;height:1px;background:#444"></div>
<div style="position:absolute;left:1078px;top:715px;width:100px;height:1px;background:#8a8886"></div>
<div style="position:absolute;left:1128px;top:712px;width:1px;height:7px;background:#8a8886"></div>
<div style="position:absolute;left:1145px;top:710px;width:6px;height:12px;background:#8a8886"></div>
<div style="position:absolute;left:1182.5px;top:715px;width:8px;height:1px;background:#444"></div>
<div style="position:absolute;left:1186px;top:711.5px;width:1px;height:8px;background:#444"></div>
<div class="t" style="left:1204.50px;top:711.23px;font:normal 11.5px/11.5px 'Liberation Sans';color:#444;letter-spacing:-0.874px;">260%</div>
<div style="position:absolute;left:0;top:34px;width:1px;height:694px;background:#2b579a"></div>
<div style="position:absolute;left:1250px;top:34px;width:1px;height:694px;background:#2b579a"></div>
<div style="position:absolute;left:0;top:727px;width:1251px;height:1px;background:#2b579a"></div></body></html>
